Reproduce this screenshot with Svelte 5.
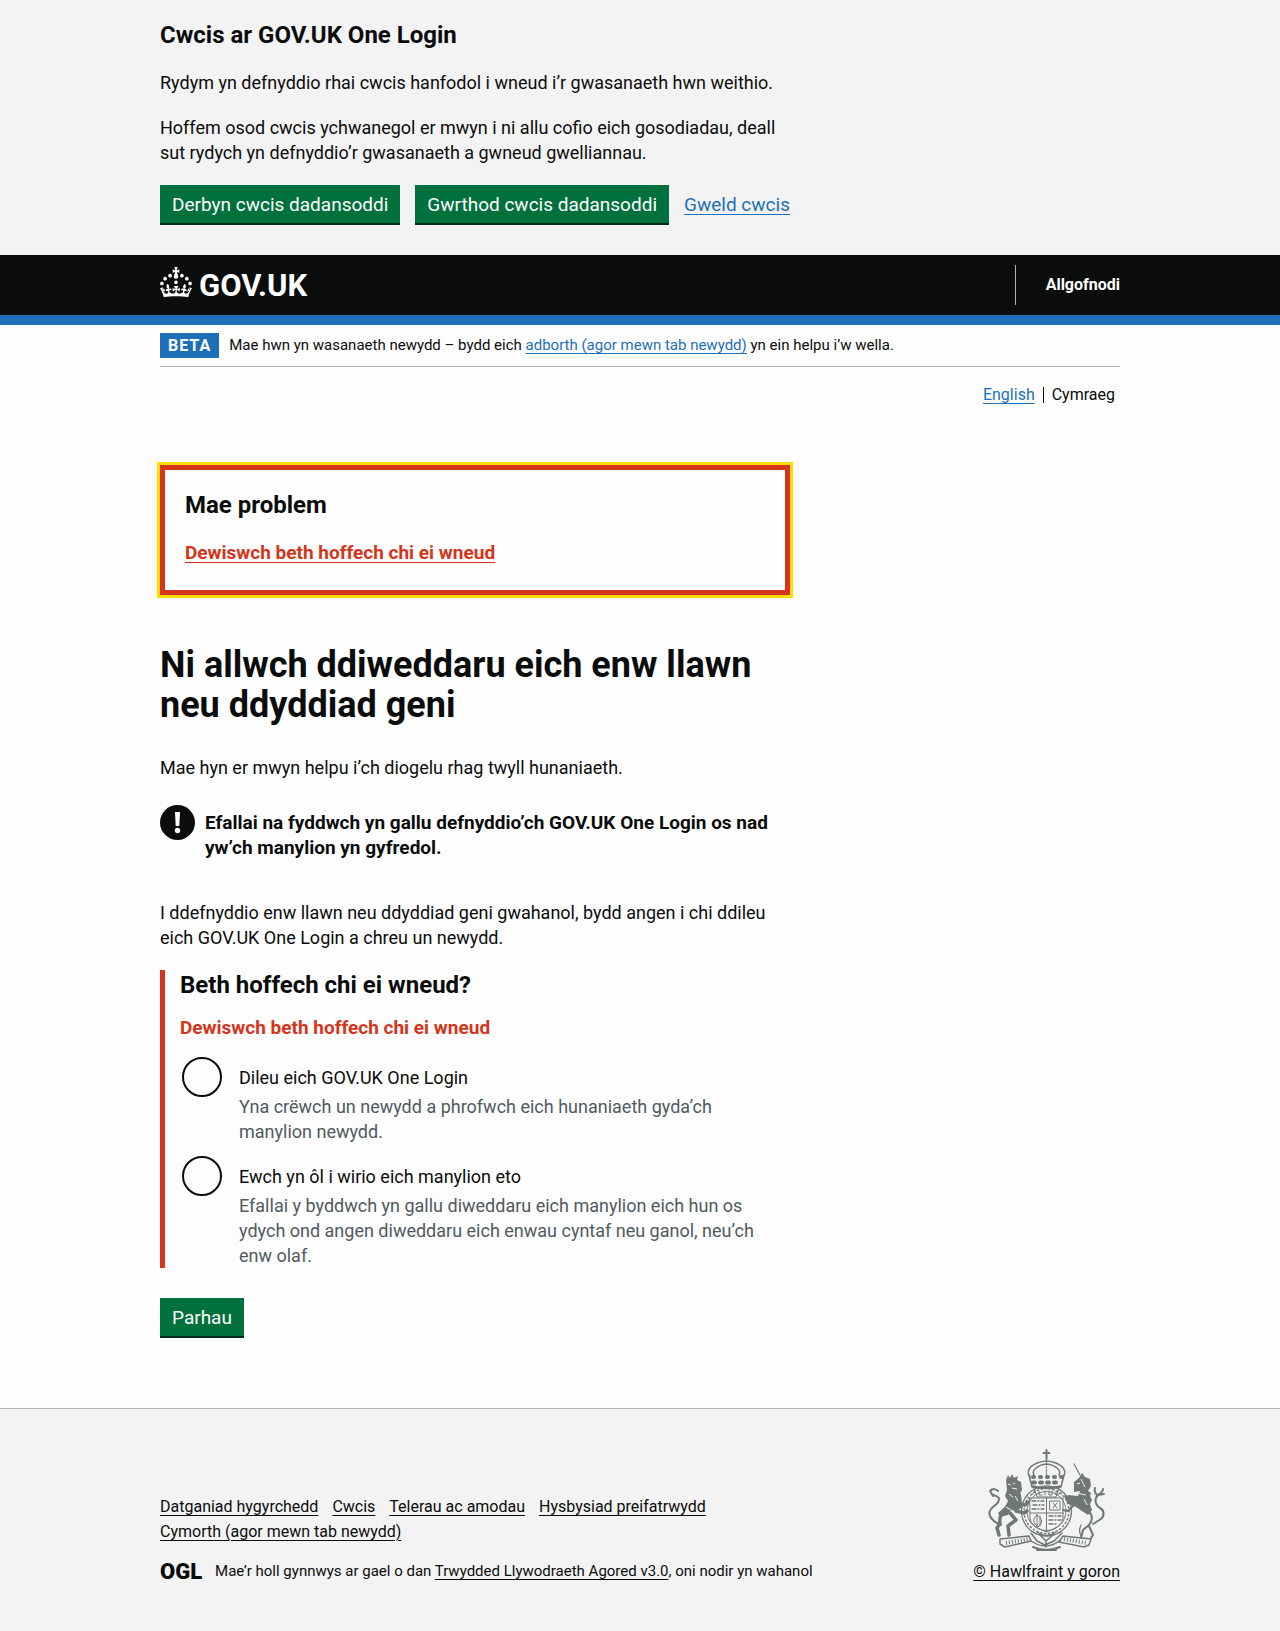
<script>
  let choice = $state('');

  const options = [
    {
      id: 'dileu',
      label: 'Dileu eich GOV.UK One Login',
      hint: 'Yna crëwch un newydd a phrofwch eich hunaniaeth gyda’ch manylion newydd.'
    },
    {
      id: 'yn-ol',
      label: 'Ewch yn ôl i wirio eich manylion eto',
      hint: 'Efallai y byddwch yn gallu diweddaru eich manylion eich hun os ydych ond angen diweddaru eich enwau cyntaf neu ganol, neu’ch enw olaf.'
    }
  ];

  const footerLinks = [
    'Datganiad hygyrchedd',
    'Cwcis',
    'Telerau ac amodau',
    'Hysbysiad preifatrwydd',
    'Cymorth (agor mewn tab newydd)'
  ];
</script>

<section class="cookies" aria-label="Cwcis ar GOV.UK One Login">
  <div class="container">
    <div class="column">
      <h2>Cwcis ar GOV.UK One Login</h2>
      <p>Rydym yn defnyddio rhai cwcis hanfodol i wneud i’r gwasanaeth hwn weithio.</p>
      <p>Hoffem osod cwcis ychwanegol er mwyn i ni allu cofio eich gosodiadau, deall sut rydych yn defnyddio’r gwasanaeth a gwneud gwelliannau.</p>
      <div class="actions">
        <button type="button" class="button">Derbyn cwcis dadansoddi</button>
        <button type="button" class="button">Gwrthod cwcis dadansoddi</button>
        <a href="#cwcis">Gweld cwcis</a>
      </div>
    </div>
  </div>
</section>

<header class="header">
  <div class="container header-row">
    <a class="logo" href="#hafan">
      <svg class="crown" viewBox="0 0 32 30" aria-hidden="true">
        <path fill="currentColor" fill-rule="evenodd" d="M22.6 10.4c-1 .4-2-.1-2.4-1-.4-.9.1-2 1-2.4.9-.4 2 .1 2.4 1s-.1 2-1 2.4m-5.9 6.7c-.9.4-2-.1-2.4-1-.4-.9.1-2 1-2.4.9-.4 2 .1 2.4 1s-.1 2-1 2.4m10.8-3.7c-1 .4-2-.1-2.4-1-.4-.9.1-2 1-2.4.9-.4 2 .1 2.4 1s0 2-1 2.4m3.3 4.8c-1 .4-2-.1-2.4-1-.4-.9.1-2 1-2.4.9-.4 2 .1 2.4 1s-.1 2-1 2.4M17 4.7l2.3 1.2V2.5l-2.3.7-.2-.2.9-3h-3.4l.9 3-.2.2c-.1.1-2.3-.7-2.3-.7v3.4L15 4.7c.1.1.1.2.2.2l-1.3 4c-.1.2-.1.4-.1.6 0 1.1.8 2 1.9 2.2h.7c1-.2 1.9-1.1 1.9-2.1 0-.2 0-.4-.1-.6l-1.3-4c-.1-.2 0-.2.1-.3m-7.6 5.7c.9.4 2-.1 2.4-1 .4-.9-.1-2-1-2.4-.9-.4-2 .1-2.4 1s0 2 1 2.4m-5 3c.9.4 2-.1 2.4-1 .4-.9-.1-2-1-2.4-.9-.4-2 .1-2.4 1s.1 2 1 2.4m-3.2 4.8c.9.4 2-.1 2.4-1 .4-.9-.1-2-1-2.4-.9-.4-2 .1-2.4 1s0 2 1 2.4m14.8 11c4.4 0 8.6.3 12.3.8 1.1-4.5 2.4-7 3.7-8.8l-2.5-.9c.2 1.3.3 1.9 0 2.7-.4-.4-.8-1.1-1.1-2.3l-1.2 4c.7-.5 1.3-.8 2-.9-1.1 2.5-2.6 3.1-3.5 3-1.1-.2-1.7-1.2-1.5-2.1.3-1.2 1.5-1.5 2.1-.1 1.1-2.3-.8-3-2-2.3 1.9-1.9 2.1-3.5.6-5.6-2.1 1.6-2.1 3.2-1.2 5.5-1.2-1.4-3.2-.6-2.5 1.6.9-1.4 2.1-.5 1.9.8-.2 1.1-1.7 2.1-3.5 1.9-2.7-.2-2.9-2.1-2.9-3.6.7-.1 1.9.5 2.9 1.9l.4-4.3c-1.1 1.1-2.1 1.4-3.2 1.4.4-1.2 2.1-3 2.1-3h-5.4s1.7 1.9 2.1 3c-1.1 0-2.1-.2-3.2-1.4l.4 4.3c1-1.4 2.2-2 2.9-1.9-.1 1.5-.2 3.4-2.9 3.6-1.9.2-3.4-.8-3.5-1.9-.2-1.3 1-2.2 1.9-.8.7-2.3-1.2-3-2.5-1.6.9-2.2.9-3.9-1.2-5.5-1.5 2-1.3 3.7.6 5.6-1.2-.7-3.1 0-2 2.3.6-1.4 1.8-1.1 2.1.1.2.9-.3 1.9-1.5 2.1-.9.2-2.4-.5-3.5-3 .6 0 1.2.3 2 .9l-1.2-4c-.3 1.1-.7 1.9-1.1 2.3-.3-.8-.2-1.4 0-2.7l-2.9.9C1.3 23 2.6 25.5 3.7 30c3.7-.5 7.9-.8 12.3-.8" />
      </svg>
      <span>GOV.UK</span>
    </a>
    <nav class="account" aria-label="Cyfrif">
      <a href="#allgofnodi">Allgofnodi</a>
    </nav>
  </div>
</header>

<div class="container">
  <div class="phase">
    <strong class="tag">BETA</strong>
    <span class="phase-text">Mae hwn yn wasanaeth newydd – bydd eich <a href="#adborth">adborth (agor mewn tab newydd)</a> yn ein helpu i’w wella.</span>
  </div>

  <nav class="languages" aria-label="Dewis iaith">
    <ul>
      <li><a href="#english" lang="en">English</a></li>
      <li aria-current="true">Cymraeg</li>
    </ul>
  </nav>

  <main class="column">
    <div class="summary" role="alert">
      <h2>Mae problem</h2>
      <a href="#dileu">Dewiswch beth hoffech chi ei wneud</a>
    </div>

    <h1>Ni allwch ddiweddaru eich enw llawn neu ddyddiad geni</h1>

    <p>Mae hyn er mwyn helpu i’ch diogelu rhag twyll hunaniaeth.</p>

    <div class="warning">
      <svg class="warning-icon" viewBox="0 0 35 35" aria-hidden="true">
        <circle cx="17.5" cy="17.5" r="17.5" fill="#0b0c0c" />
        <path d="M15 7h5l-.7 14h-3.6z" fill="#fff" />
        <circle cx="17.5" cy="25.500" r="2.700" fill="#fff" />
      </svg>
      <strong>Efallai na fyddwch yn gallu defnyddio’ch GOV.UK One Login os nad yw’ch manylion yn gyfredol.</strong>
    </div>

    <p>I ddefnyddio enw llawn neu ddyddiad geni gwahanol, bydd angen i chi ddileu eich GOV.UK One Login a chreu un newydd.</p>

    <form onsubmit={(event) => event.preventDefault()}>
      <div class="group">
        <fieldset aria-describedby="gwall">
          <legend>Beth hoffech chi ei wneud?</legend>
          <p class="error" id="gwall">Dewiswch beth hoffech chi ei wneud</p>
          <div class="radios">
            {#each options as option (option.id)}
              <div class="radio">
                <input
                  type="radio"
                  name="dewis"
                  id={option.id}
                  value={option.id}
                  bind:group={choice}
                  aria-describedby="{option.id}-hint"
                />
                <div class="radio-text">
                  <label for={option.id}>{option.label}</label>
                  <div class="hint" id="{option.id}-hint">{option.hint}</div>
                </div>
              </div>
            {/each}
          </div>
        </fieldset>
      </div>
      <button type="submit" class="button">Parhau</button>
    </form>
  </main>
</div>

<footer class="footer">
  <div class="container footer-row">
    <div class="footer-main">
      <ul class="footer-links">
        {#each footerLinks as link}
          <li><a href="#troedyn">{link}</a></li>
        {/each}
      </ul>
      <div class="licence">
        <span class="ogl" aria-hidden="true">OGL</span>
        <span>Mae’r holl gynnwys ar gael o dan <a href="#trwydded">Trwydded Llywodraeth Agored v3.0</a>, oni nodir yn wahanol</span>
      </div>
    </div>
    <a class="copyright" href="#hawlfraint">
      <svg class="crest" viewBox="0 0 128 104" aria-hidden="true">
        <g fill="none" stroke="#6f7777" stroke-linecap="round" stroke-linejoin="round">
          <!-- crown -->
          <path stroke-width="2" d="M63.500 1v9M60.500 4h6" />
          <path stroke-width="1.500" d="M47 28c-6-8 4-15 16.500-16 12.500 1 22.500 8 16.500 16M51 26c-3-5 4-10 12.500-11 8.500 1 15.500 6 12.500 11" />
          <path stroke-width="1.300" stroke-dasharray="1 2" d="M63.500 12v16" />
          <path stroke-width="4" stroke-dasharray="1 6" d="M50 28h29" />
          <path stroke-width="1.500" d="M46 26l3 12q14.500 3 29 0l3-12" />
          <path stroke-width="4" stroke-dasharray="2 5" d="M50 33.500h28" />
          <path stroke-width="1.500" d="M49 37q14.500 3 29 0" />
          <path stroke-width="1" d="M52 41l-3 5M56 42v4h3M62 42v4M66 42v4h3v-4M73 42v4l5-2M51 39l3 9h19l3-9" />
          <!-- garter and shield -->
          <circle cx="63.500" cy="62" r="25" stroke-width="1.300" stroke-dasharray="5 1" />
          <circle cx="63.500" cy="62" r="22.500" stroke-width="1.500" stroke-dasharray="1 3" />
          <circle cx="63.500" cy="62" r="19.500" stroke-width="1" />
          <path stroke-width="1" d="M47 49h33v20c0 7-9 11-16.500 14C56 80 47 76 47 69zM63.500 49v33M47 64h33" />
          <path stroke-width="1.300" stroke-dasharray="4 2 1 2" d="M49 52h12M50 56h11M49 60h12M66 67h12M66 71h12M66 75h9" />
          <path stroke-width="1" d="M67 52h10v9H67zM70 54l4 5M74 54l-4 5M54 66c-5 4-4 8 1 12 5-4 5-8-1-12M54 66v12M57 67v10" />
          <path stroke-width="1.500" d="M54 83q9 7 19 0M57 86l6 6 7-6M63 92v6M48 84l6 8 8 4 9-4 8-8" />
          <!-- lion tail and legs -->
          <path stroke-width="2" d="M18 76C8 72 4 65 8 60c3-4 8-5 8-10 0-4-7-2-9-8M7 42c3-3 6-2 8 0M7 42l3 5" />
          <path stroke-width="3.500" d="M24 58c-5 5-8 9-7 16l-3 5 2 7M27 64l6 7-8 6 1 9M33 54l9 2 3-3M33 62l8 2 3-2" />
          <!-- unicorn horn, legs and tail -->
          <path stroke-width="1.200" d="M91 15l6 11" />
          <path stroke-width="2" d="M93 50l-9 0-2-3M92 55l-7 7-5-1M110 75l8-5c4-4 3-9-1-11-5-3-6-9-2-13 3-2 5-3 5-6M114 46c-2-2-3-4-2-7M115 46l6-1" />
          <path stroke-width="2" d="M104 60c5 6 7 9 2 16l-6 5-2 8M106 77l4 9-2 3" />
          <path stroke-width="1.200" d="M98 76c-2 4-2 7 0 11" />
          <!-- motto ribbon -->
          <path stroke-width="1.500" d="M17 90l29-3 2 5-26 6-5-3zM80 87l28 3-2 6-5 2-25-5zM48 92q15 10 28 0" />
          <path stroke-width="4" stroke-dasharray="1 2" stroke-linecap="butt" d="M23 94l22-4M81 90l22 4" />
          <path stroke-width="2" d="M50 98q13 6 27 0M54 101h19" />
        </g>
        <g fill="#6f7777">
          <!-- lion body and mane -->
          <path d="M23 31l2-5 2 3 2-4 2 4 4-2-1 4 4 2 1 8-2 4 1 8 2 5-7 4-5-1-3 5-8 2-2-4 7-6 3-6-3-5 2-6z" />
          <path d="M29 44l9 1 1 11-8 3z" />
          <!-- unicorn head and body -->
          <path d="M91 33l5-4 3-5 3 4 5 2 1 7-3 5 3 2-1 3 2 4-2 4 2 6-4 5-6-4-6-4-8-3-3-5 3-4 10 1 2-5-6 1z" />
        </g>
        <path fill="none" stroke="#f3f3f3" stroke-width="1" d="M89 43l14 3M94 35l3-1M25 35l3 1M30 34l2 1M29 39l5 1M98 30l4 8M26 45l4 3M32 47l3 5M23 58l5 3M101 50l3 6" />
      </svg>
      <span>© Hawlfraint y goron</span>
    </a>
  </div>
</footer>

<style>
  :global(body) {
    margin: 0;
    background: #f3f3f3;
    color: #0b0c0c;
    font-family: Roboto, "Liberation Sans", sans-serif;
    font-size: 18px;
    line-height: 25px;
  }

  :global(#app) {
    background: #fdfdfd;
  }

  .container {
    max-width: 960px;
    margin: 0 auto;
  }

  .column {
    max-width: 630px;
  }

  h1,
  h2,
  p,
  ul {
    margin: 0;
    padding: 0;
  }

  ul {
    list-style: none;
  }

  p {
    margin-bottom: 20px;
  }

  h1 {
    margin-bottom: 30px;
    font-size: 36px;
    line-height: 40px;
  }

  h2 {
    margin-bottom: 20px;
    font-size: 24px;
    line-height: 30px;
  }

  a {
    color: #1d70b8;
    text-decoration-thickness: 1px;
    text-underline-offset: 3px;
  }

  .button {
    padding: 8px 12px 7px;
    border: 0;
    border-bottom: 2px solid #002d18;
    border-radius: 0;
    background: #00703c;
    color: #fff;
    font-family: inherit;
    font-size: 19px;
    line-height: 23px;
    cursor: pointer;
  }

  .cookies {
    padding: 20px 0 30px;
    background: #f3f3f3;
  }

  .actions {
    display: flex;
    align-items: baseline;
    gap: 15px;
    font-size: 19px;
  }

  .header {
    border-bottom: 10px solid #1d70b8;
    background: #0b0c0c;
  }

  .header-row {
    display: flex;
    align-items: center;
    justify-content: space-between;
    height: 60px;
  }

  .logo {
    display: flex;
    align-items: center;
    gap: 7px;
    color: #fff;
    font-size: 31px;
    font-weight: 700;
    text-decoration: none;
  }

  .crown {
    width: 32px;
    height: 30px;
    margin-bottom: 6px;
  }

  .account {
    padding: 10px 0 10px 30px;
    border-left: 1px solid #b1b4b6;
    font-size: 16px;
    font-weight: 700;
    line-height: 20px;
  }

  .account a {
    color: #fff;
    text-decoration: none;
  }

  .phase {
    display: flex;
    align-items: center;
    gap: 10px;
    padding: 8px 0;
    border-bottom: 1px solid #b1b4b6;
    font-size: 16px;
  }

  .phase-text {
    font-size: 15px;
  }

  .tag {
    padding: 0 8px;
    background: #1d70b8;
    color: #fff;
    letter-spacing: 1px;
  }

  .languages ul {
    display: flex;
    justify-content: flex-end;
    padding: 20px 5px 0 0;
    font-size: 16px;
    line-height: 16px;
  }

  .languages li + li {
    margin-left: 8px;
    padding-left: 8px;
    border-left: 1px solid #0b0c0c;
  }

  main {
    padding: 62px 0 70px;
  }

  .summary {
    margin-bottom: 50px;
    padding: 20px 20px 25px;
    border: 5px solid #d4351c;
    outline: 3px solid #fd0;
  }

  .summary a {
    color: #d4351c;
    font-size: 19px;
    font-weight: 700;
  }

  .warning {
    display: flex;
    gap: 10px;
    margin: 25px 0 40px;
    font-size: 19px;
  }

  .warning-icon {
    flex: none;
    width: 35px;
    height: 35px;
  }

  .warning strong {
    padding-top: 5px;
  }

  .group {
    margin-bottom: 30px;
    padding-left: 15px;
    border-left: 5px solid #d4351c;
  }

  fieldset {
    min-width: 0;
    margin: 0;
    padding: 0;
    border: 0;
  }

  legend {
    margin-bottom: 15px;
    padding: 0;
    font-size: 24px;
    font-weight: 700;
    line-height: 30px;
  }

  .error {
    margin-bottom: 15px;
    color: #d4351c;
    font-size: 19px;
    font-weight: 700;
  }

  .radios {
    display: grid;
    gap: 10px;
  }

  .radio {
    display: flex;
    gap: 17px;
    padding: 2px 15px 0 2px;
  }

  .radio input {
    flex: none;
    appearance: none;
    width: 40px;
    height: 40px;
    margin: 0;
    border: 2px solid #0b0c0c;
    border-radius: 50%;
  }

  .radio input:checked {
    background: radial-gradient(circle, #0b0c0c 10px, transparent 11px);
  }

  .radio-text {
    padding-top: 8px;
  }

  .radio label {
    display: block;
    margin-bottom: 4px;
  }

  .hint {
    color: #505a5f;
  }

  .footer {
    padding: 40px 0 50px;
    border-top: 1px solid #b1b4b6;
    background: #f3f3f3;
    font-size: 16px;
  }

  .footer a {
    color: #0b0c0c;
  }

  .footer-row {
    display: flex;
    align-items: flex-end;
    justify-content: space-between;
    gap: 30px;
  }

  .footer-links {
    display: flex;
    flex-wrap: wrap;
    column-gap: 14px;
    max-width: 630px;
    margin-bottom: 15px;
  }

  .licence {
    display: flex;
    align-items: center;
    gap: 13px;
    font-size: 15px;
  }

  .ogl {
    font-size: 22px;
    font-weight: 900;
  }

  .copyright {
    display: flex;
    flex-direction: column;
    align-items: center;
    gap: 6px;
  }

  .crest {
    width: 128px;
    height: 104px;
  }
</style>
